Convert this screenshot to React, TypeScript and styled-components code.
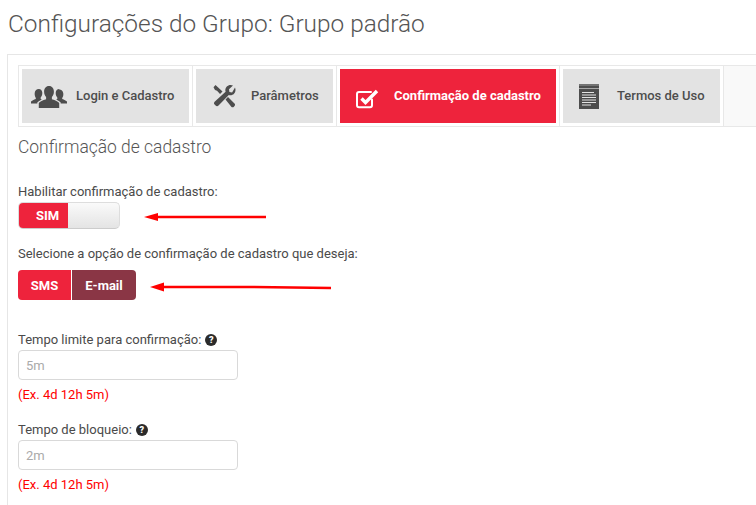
import React from "react";
import styled, { createGlobalStyle } from "styled-components";

const Global = createGlobalStyle`
  html, body { margin: 0; padding: 0; background: #fff; overflow: hidden; }
  body { width: 756px; height: 505px; font-family: Roboto, "Liberation Sans", sans-serif; color: #444; }
`;

const Page = styled.div`
  width: 756px;
  height: 505px;
  overflow: hidden;
  padding: 0 0 0 7px;
  box-sizing: border-box;
`;

const Title = styled.h1`
  margin: 0;
  height: 54px;
  box-sizing: border-box;
  padding: 10px 0 0 1px;
  font-size: 24.4px;
  line-height: 28px;
  font-weight: 300;
  color: #555;
  white-space: nowrap;
`;

const Panel = styled.div`
  border-top: 1px solid #e6e6e6;
  border-left: 1px solid #e6e6e6;
  height: 451px;
  box-sizing: border-box;
  padding: 10px 0 0 10px;
`;

const TabBar = styled.div`
  display: flex;
  height: 62px;
  box-sizing: border-box;
  border: 1px solid #e8e8e8;
  border-right: 0;
  background: #f9f9f9;
`;

const TabCell = styled.div`
  background: #fff;
  padding: 3px;
  border-right: 1px solid #e8e8e8;
  display: flex;
`;

const Tab = styled.div<{ $active?: boolean; $w: number; $gap: number; $pad: number }>`
  width: ${(p) => p.$w}px;
  height: 54px;
  box-sizing: border-box;
  padding-left: ${(p) => p.$pad}px;
  display: flex;
  align-items: center;
  gap: ${(p) => p.$gap}px;
  background: ${(p) => (p.$active ? "#ee233c" : "#e3e3e3")};
  color: ${(p) => (p.$active ? "#fff" : "#4d4d4d")};
  font-size: 13px;
  font-weight: ${(p) => (p.$active ? 700 : 500)};
  white-space: nowrap;
`;

const TabLabel = styled.span`
  margin-bottom: 2px;
`;

const Heading = styled.h2`
  margin: 9px 0 0;
  font-size: 17.45px;
  line-height: 22px;
  font-weight: 300;
  color: #555;
`;

const Label = styled.div<{ $top: number }>`
  margin-top: ${(p) => p.$top}px;
  display: flex;
  align-items: center;
  gap: 4px;
  font-size: 13px;
  line-height: 16px;
  color: #4a4a4a;
  white-space: nowrap;
`;

const ControlRow = styled.div<{ $gap: number; $top: number }>`
  display: flex;
  align-items: center;
  gap: ${(p) => p.$gap}px;
  margin-top: ${(p) => p.$top}px;
`;

const Toggle = styled.div`
  width: 102px;
  height: 27px;
  display: flex;
  box-sizing: border-box;
  border: 1px solid #ddd;
  border-bottom-color: #ccc;
  border-radius: 5px;
  overflow: hidden;
  background: linear-gradient(#fafafa, #e4e4e4);
`;

const ToggleOn = styled.div`
  width: 49px;
  background: #ee233c;
  color: #fff;
  font-size: 13px;
  font-weight: 700;
  display: flex;
  align-items: center;
  justify-content: center;
  padding-left: 8px;
  box-sizing: border-box;
`;

const Segmented = styled.div`
  display: flex;
  height: 30px;
  border-radius: 4px;
  overflow: hidden;
`;

const Segment = styled.div<{ $dark?: boolean; $w: number }>`
  width: ${(p) => p.$w}px;
  box-sizing: border-box;
  background: ${(p) => (p.$dark ? "#8a3645" : "#ee233c")};
  color: #fff;
  font-size: 13px;
  font-weight: 700;
  display: flex;
  align-items: center;
  justify-content: center;
  ${(p) => (p.$dark ? "border-left: 1px solid #fff;" : "")}
`;

const Input = styled.input`
  display: block;
  width: 220px;
  height: 30px;
  box-sizing: border-box;
  margin-top: 2px;
  padding: 0 7px;
  border: 1px solid #d9d9d9;
  border-radius: 4px;
  background: #fff;
  font-family: Roboto, "Liberation Sans", sans-serif;
  font-size: 13px;
  outline: none;
  &::placeholder { color: #aaa; opacity: 1; }
`;

const Hint = styled.div`
  margin-top: 7px;
  font-size: 13px;
  line-height: 16px;
  color: #ff0000;
`;

const HelpDot = styled.span`
  width: 12px;
  height: 12px;
  border-radius: 50%;
  background: #2b2b2b;
  color: #fff;
  font-size: 9px;
  font-weight: 900;
  line-height: 12px;
  text-align: center;
  display: inline-block;
`;

const ArrowSvg = styled.svg`
  display: block;
  margin-top: 3px;
`;

const Arrow = ({ w, d, tip }: { w: number; d: string; tip: string }) => (
  <ArrowSvg width={w} height={10} viewBox={`0 0 ${w} 10`}>
    <path d={tip} fill="#ff0000" />
    <path d={d} stroke="#ff0000" strokeWidth={2.4} fill="none" />
  </ArrowSvg>
);

const UsersIcon = () => (
  <svg width={36} height={26} viewBox="0 0 36 26" fill="#4d4d4d">
    <path d="M18 3c3.200 0 4.900 2.500 4.900 5.700 0 2.300-.9 4.200-2 5.400v2.100c3.400 1 6.300 2.400 7.300 3.700V25H7.800v-5.100c1-1.300 3.900-2.700 7.300-3.700v-2.100C14 12.900 13.100 11 13.100 8.700 13.100 5.500 14.800 3 18 3z" />
    <path d="M7.800 6c2 0 3.400 1.500 3.500 3.800.1 1.900-.6 3.600-1.600 4.600v1.500l1.200.5c-2 .9-3.700 1.900-4.600 3v1H0v-1.800c.8-.9 2.900-2 4.800-2.600v-1.100C3.900 13.400 3.500 11.800 3.700 10c.2-2.500 2-4 4.100-4z" />
    <path d="M28.200 6c-2 0-3.400 1.500-3.500 3.800-.1 1.900.6 3.600 1.600 4.600v1.500l-1.200.5c2 .9 3.700 1.900 4.600 3v1H36v-1.800c-.8-.9-2.900-2-4.800-2.600v-1.100c.9-1 1.300-2.600 1.100-4.400-.2-2.500-2-4-4.100-4z" />
  </svg>
);

const ToolsIcon = () => (
  <svg width={24} height={24} viewBox="0 0 24 24" fill="#4d4d4d">
    <path d="M23 3.500c1 2.300.5 4.700-1 6.200-1.400 1.400-3.400 1.800-5.200 1.200L6.500 21.600c-.8.800-2.100.8-2.900 0l-1-1c-.8-.8-.8-2.100 0-2.900L13.600 7.700c-.6-1.800-.2-3.800 1.200-5.200C16.300 1 18.700.5 21 1.500l-4 3.800.4 2.800 2.700.4z" />
    <path d="M1.500 3.200 3.500 1l7 6.500-2.500 2.500L5 6.700 3 6z" />
    <path d="M13.500 15.500l2.500-2.500 6.500 6.500c.7.700.7 1.900 0 2.600l-.6.600c-.7.700-1.900.7-2.600 0z" />
  </svg>
);

const CheckIcon = () => (
  <svg width={23} height={26} viewBox="0 0 23 26" fill="none">
    <path d="M16 16.500v5.700a2 2 0 0 1-2 2H3a2 2 0 0 1-2-2V11a2 2 0 0 1 2-2h12" stroke="#fff" strokeWidth={2} strokeLinecap="round" />
    <path d="M5.500 15.500l4 4L21 8" stroke="#fff" strokeWidth={3.400} />
  </svg>
);

const NoteIcon = () => (
  <svg width={20} height={25} viewBox="0 0 20 25">
    <rect x={0} y={0} width={20} height={25} fill="#4d4d4d" />
    <path d="M1 .5v1M3 .5v1M5 .5v1M7 .5v1M9 .5v1M11 .5v1M13 .5v1M15 .5v1M17 .5v1M19 .5v1" stroke="#e3e3e3" strokeWidth={1} />
    <path d="M0 4.500h20" stroke="#e3e3e3" strokeWidth={.6} />
    <path d="M3 8.500h12M3 11h14M3 13.500h14M3 16h14M3 18.500h14M3 21h9" stroke="#e3e3e3" strokeWidth={1} />
  </svg>
);

export default function App() {
  return (
    <Page>
      <Global />
      <Title>Configurações do Grupo: Grupo padrão</Title>
      <Panel>
        <TabBar>
          <TabCell>
            <Tab $w={167} $pad={9} $gap={9}>
              <UsersIcon />
              <TabLabel>Login e Cadastro</TabLabel>
            </Tab>
          </TabCell>
          <TabCell>
            <Tab $w={137} $pad={16} $gap={15}>
              <ToolsIcon />
              <TabLabel>Parâmetros</TabLabel>
            </Tab>
          </TabCell>
          <TabCell>
            <Tab $active $w={216} $pad={16} $gap={15}>
              <CheckIcon />
              <TabLabel>Confirmação de cadastro</TabLabel>
            </Tab>
          </TabCell>
          <TabCell>
            <Tab $w={157} $pad={16} $gap={18}>
              <NoteIcon />
              <TabLabel>Termos de Uso</TabLabel>
            </Tab>
          </TabCell>
        </TabBar>
        <Heading>Confirmação de cadastro</Heading>
        <Label $top={26}>Habilitar confirmação de cadastro:</Label>
        <ControlRow $gap={24} $top={2}>
          <Toggle>
            <ToggleOn>SIM</ToggleOn>
          </Toggle>
          <Arrow w={122} tip="M0 5 14 1v8z" d="M10 5H122" />
        </ControlRow>
        <Label $top={17}>Selecione a opção de confirmação de cadastro que deseja:</Label>
        <ControlRow $gap={14} $top={8}>
          <Segmented>
            <Segment $w={53}>SMS</Segment>
            <Segment $dark $w={65}>E-mail</Segment>
          </Segmented>
          <Arrow w={181} tip="M0 5 14 .5v9z" d="M10 5 H100 L181 6" />
        </ControlRow>
        <Label $top={32}>
          Tempo limite para confirmação: <HelpDot>?</HelpDot>
        </Label>
        <Input placeholder="5m" />
        <Hint>(Ex. 4d 12h 5m)</Hint>
        <Label $top={19}>
          Tempo de bloqueio: <HelpDot>?</HelpDot>
        </Label>
        <Input placeholder="2m" />
        <Hint>(Ex. 4d 12h 5m)</Hint>
      </Panel>
    </Page>
  );
}
